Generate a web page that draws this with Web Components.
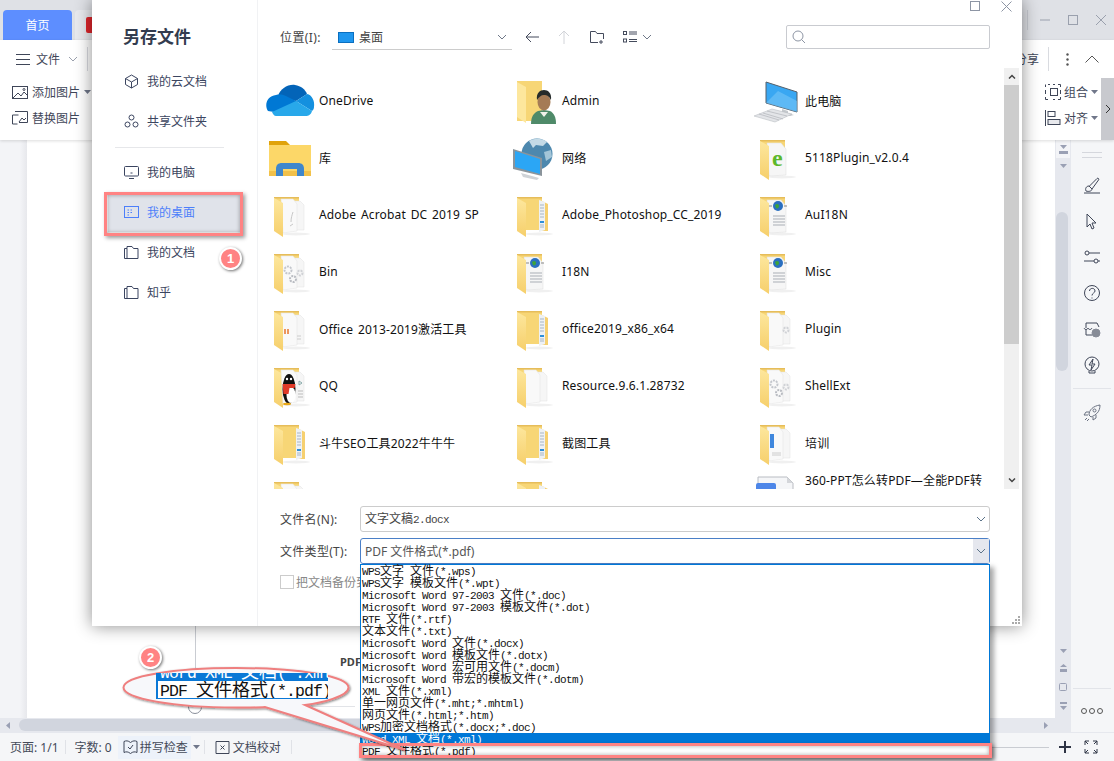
<!DOCTYPE html>
<html lang="zh">
<head>
<meta charset="utf-8">
<title>另存文件</title>
<style>
  html, body { margin: 0; width: 1114px; height: 761px; overflow: hidden; background: #fff; }
  body { font: 12px "Noto Sans", "Noto Sans CJK SC", sans-serif; color: #333; }
</style>
</head>
<body>
<wps-window>
  <wps-titlebar></wps-titlebar>
  <wps-ribbon></wps-ribbon>
  <wps-workspace></wps-workspace>
  <wps-statusbar></wps-statusbar>
  <save-dialog></save-dialog>
  <type-list></type-list>
  <mark-layer></mark-layer>
</wps-window>

<script>
// base class, every element renders its html into an open shadow root
class Box extends HTMLElement {
  constructor() {
    super();
    this.attachShadow({ mode: 'open' });
  }
  connectedCallback() {
    this.shadowRoot.innerHTML = this.render();
  }
}

// line icon helper
const line = (w, h, body, color = '#3f4658', vb = '') =>
  `<svg width="${w}" height="${h}" viewBox="${vb || `0 0 ${w} ${h}`}" fill="none" stroke="${color}" stroke-width="1" style="display:block;flex:none">${body}</svg>`;

const chevron = (color = '#7b8394') => line(10, 6, '<path d="M1 1l4 4 4-4"/>', color);
const caret = (color = '#70778a') => `<svg width="7" height="4" style="display:block;flex:none"><path d="M0 0h7L3.5 4z" fill="${color}"/></svg>`;

// text in the old bitmap style: latin is half as wide as the chinese
class SimText extends Box {
  render() {
    const runs = (this.getAttribute('t') || '').split(/([\u2e80-\u9fff]+)/);
    const spans = runs.map((r, i) => r ? `<span class="${i % 2 ? 'c' : 'l'}">${r}</span>` : '').join('');
    return `<style>
      :host { display: inline-block; white-space: pre; font-size: 12px; line-height: 1; }
      .c { font-family: "Noto Sans CJK SC", sans-serif; }
      .l { font-family: "Liberation Mono", monospace; font-size: .9167em; letter-spacing: -.0545em; }
    </style>${spans}`;
  }
}
customElements.define('sim-text', SimText);

class WpsWindow extends Box {
  render() {
    return `<style>
      :host { display: flex; flex-direction: column; position: relative; width: 1114px; height: 761px; overflow: hidden; }
    </style><slot></slot>`;
  }
}
customElements.define('wps-window', WpsWindow);

class WpsTitlebar extends Box {
  render() {
    return `<style>
      :host { display: flex; align-items: flex-end; height: 40px; padding-left: 3px; gap: 3px; background: #dfe1e6; flex: none; }
      .home { width: 69px; height: 30px; background: #5d8eff; color: #fff; border-radius: 4px 4px 0 0; display: flex; align-items: center; justify-content: center; font-size: 12px; }
      .doc { width: 120px; height: 30px; background: #e9eaee; border-radius: 4px 4px 0 0; display: flex; align-items: center; padding-left: 11px; box-sizing: border-box; }
      .logo { width: 16px; height: 16px; background: #e0262c; border-radius: 2px; }
      .ctl { margin-left: auto; display: flex; align-items: center; height: 40px; padding-right: 8px; }
      .sep { width: 1px; height: 20px; background: #c9ccd3; margin-right: 12px; }
      .ctl svg { margin-left: 18px; }
      .ctl svg:first-of-type { margin-left: 0; }
    </style>
    <div class="home">首页</div>
    <div class="doc"><div class="logo"></div></div>
    <div class="ctl">
      <div class="sep"></div>
      ${line(10, 10, '<path d="M0 5h10"/>', '#9aa0ad')}
      ${line(10, 10, '<rect x=".5" y=".5" width="9" height="9"/>', '#9aa0ad')}
      ${line(10, 10, '<path d="M0 0l10 10M10 0L0 10"/>', '#9aa0ad')}
    </div>`;
  }
}
customElements.define('wps-titlebar', WpsTitlebar);

class WpsRibbon extends Box {
  render() {
    return `<style>
      :host { display: flex; flex-direction: column; height: 100px; background: #fff; flex: none; box-shadow: 0 1px 3px rgba(0,0,0,.14); position: relative; z-index: 1; color: #3f4658; }
      .top { display: flex; justify-content: space-between; align-items: center; height: 38px; }
      .bottom { display: flex; justify-content: space-between; flex: 1; }
      .group { display: flex; align-items: center; }
      .file { padding-left: 16px; gap: 6px; font-size: 12px; }
      .file svg:nth-of-type(2) { margin-left: 2px; }
      .file .sep { margin-left: 3px; }
      .sep { width: 1px; height: 24px; background: #d9dbe0; }
      .tools { display: grid; grid-template-rows: 26px 26px; align-content: start; padding: 1px 0 0 12px; }
      .tool { display: flex; align-items: center; gap: 3px; }
      .right { display: flex; }
      .box { width: 7px; height: 21px; border: 1px solid #3f4658; border-left: 0; margin-top: 6px; box-sizing: border-box; }
      .part { position: relative; width: 32px; }
      .part .caret { position: absolute; top: 39px; left: 8px; }
      .scroll { width: 13px; background: #c8c9ce; display: flex; align-items: center; justify-content: center; margin-left: 3px; }
    </style>
    <div class="top">
      <div class="group file">
        ${line(14, 11, '<path d="M0 .5h14M0 5.5h14M0 10.5h14"/>')}
        <span>文件</span>
        ${chevron('#9aa0ad')}
        <span class="sep"></span>
      </div>
      <div class="group share">
        <span style="margin-right:9px">分享</span>
        <span class="sep"></span>
        <svg width="3" height="13" style="margin:0 16px 0 17px"><circle cx="1.5" cy="1.5" r="1.2" fill="#555"/><circle cx="1.5" cy="6.5" r="1.2" fill="#555"/><circle cx="1.5" cy="11.5" r="1.2" fill="#555"/></svg>
        ${line(14, 8, '<path d="M.5 7.5l6.5-6.5 6.5 6.5"/>', '#555')}
        <span style="width:15px"></span>
      </div>
    </div>
    <div class="bottom">
      <div class="tools">
        <div class="tool" style="gap:4px">
          ${line(16, 13, '<rect x=".5" y=".5" width="15" height="12"/><path d="M1 12l5-5 3 3 3-4 3 3"/><circle cx="12" cy="3.5" r="1"/>')}
          <span>添加图片</span>${caret()}
        </div>
        <div class="tool" style="gap:4px">
          ${line(16, 14, '<path d="M3 .5h12.5v11H7M.5 4h6M.5 4v9h5"/><path d="M7 11l3-4 2 2 2-2"/>')}
          <span>替换图片</span>
        </div>
      </div>
      <div class="right">
        <div class="part"><div class="box"></div><span class="caret">${caret()}</span></div>
        <div class="tools" style="padding-left:17px">
          <div class="tool">
            ${line(16, 16, '<path d="M3 .5h2M8 .5h2M13 .5h2.5V3M15.5 6v4M15.5 13v2.5H13M8 15.5h2M3 15.5H.5V13M.5 6v4M.5 3V.5"/><rect x="5.5" y="4.5" width="7" height="7"/>')}
            <span>组合</span>${caret()}
          </div>
          <div class="tool">
            ${line(16, 16, '<path d="M.5 0v16"/><rect x="3" y="1.5" width="7" height="5" /><rect x="3" y="9.5" width="12" height="5" fill="#e8e9ed"/>')}
            <span>对齐</span>${caret()}
          </div>
        </div>
        <div class="scroll">${line(6, 10, '<path d="M1 1l4 4-4 4"/>', '#333')}</div>
      </div>
    </div>`;
  }
}
customElements.define('wps-ribbon', WpsRibbon);

const PANEL_ICONS = [
  '<path d="M1 17h16M3 15c-1-2 0-5 3-5l3 3c0 2-3 3-6 2zM6.5 10L14 2.5c1-1 2.500 .5 1.500 1.500L9 13"/>',
  '<path d="M4 2v13l3-3 2 5 2-1-2-5h4z"/>',
  '<circle cx="4" cy="5" r="2"/><path d="M6 5h11M1 13h10"/><circle cx="13" cy="13" r="2"/><path d="M15 13h2"/>',
  '<circle cx="9" cy="9" r="7.500"/><path d="M6.500 7c0-3.500 5.500-3.500 5.500 0 0 2-3 2-3 4.500M9 13.500v1"/>',
  '<path d="M3 8V3h11l2 4M1 8c1 2 3 2 4 0 1 2 3 2 4 0M3 9v6h6"/><circle cx="13" cy="13" r="4" fill="#3f4658" opacity=".6"/>',
  '<circle cx="9" cy="8" r="7"/><path d="M10 3L6 9h3l-1 5 4-6H9zM6 15v2h6v-2"/>'
];

class WpsWorkspace extends Box {
  render() {
    const icons = PANEL_ICONS.map(p => `<div class="ico">${line(18, 18, p)}</div>`).join('');
    return `<style>
      :host { display: grid; grid-template-columns: 1fr 43px; grid-template-rows: 1fr 14px; height: 592px; flex: none; background: #f3f4f7; }
      .main { display: flex; min-height: 0; }
      .gutter { width: 20px; background: #f3f4f7; }
      .gutter2 { width: 7px; background: linear-gradient(90deg,#f3f4f7,#e7e8ec); }
      .page { flex: 1; background: #fff; position: relative; overflow: hidden; }
      .vline { position: absolute; left: 168px; top: 470px; width: 1px; height: 96px; background: #c9ccd2; }
      .hline { position: absolute; left: 168px; top: 566px; width: 160px; height: 1px; background: #e2e4e8; }
      .ring { position: absolute; left: 161px; top: 560px; width: 12px; height: 12px; border: 1px solid #8a8f9b; border-radius: 50%; }
      .pdf { position: absolute; left: 313px; top: 514px; font-size: 11px; font-weight: 700; color: #444; }
      .vbar { width: 16px; background: #e6e8ee; display: flex; flex-direction: column; align-items: center; }
      .vbar .head { width: 14px; height: 18px; background: #f3f4f7; display: flex; flex-direction: column; align-items: center; justify-content: center; gap: 2px; }
      .vbar .thumb { width: 12px; height: 159px; margin-top: 44px; margin-right: 2px; background: #d1d5de; border-radius: 6px; }
      .vbar .foot { margin-top: auto; display: flex; flex-direction: column; align-items: center; gap: 11px; padding-bottom: 8px; }
      .up { margin-top: 6px; }
      .panel { grid-row: 1 / 3; grid-column: 2; background: #f5f6f8; display: flex; flex-direction: column; align-items: center; padding-right: 1px; box-sizing: border-box; }
      .grip { width: 20px; height: 4px; border-top: 1px solid #d5d7dd; border-bottom: 1px solid #d5d7dd; margin: 12px 0 9px; }
      .ico { height: 36px; display: flex; align-items: center; }
      .rule { width: 38px; height: 1px; background: #e2e4e9; }
      .rocket { margin-top: 6px; }
      .bot { margin-top: auto; width: 38px; border-top: 1px solid #e2e4e9; height: 43px; display: flex; align-items: center; justify-content: center; gap: 2px; }
      .bot i { width: 4px; height: 4px; border: 1px solid #555; border-radius: 50%; }
      .hbar { background: #e6e8ee; display: flex; align-items: center; padding-left: 6px; }
      .hbar .thumb { margin-left: 9px; width: 900px; height: 12px; background: #d1d5de; border-radius: 6px; }
      .hbar .end { margin-left: auto; margin-right: 23px; }
    </style>
    <div class="main">
      <div class="gutter"></div><div class="gutter2"></div>
      <div class="page">
        <div class="vline"></div><div class="hline"></div><div class="ring"></div><div class="pdf">PDF</div>
      </div>
      <div class="vbar">
        <div class="head">${caret('#9aa0b4')}<svg width="9" height="3"><path d="M0 0h9v3H0z" fill="#9aa0b4"/></svg></div>
        <div class="up">${caret('#9aa0b4')}</div>
        <div class="thumb"></div>
        <div class="foot">
          ${caret('#9aa0b4')}
          <svg width="7" height="8"><path d="M3.500 0L7 3H0zM0 5h7v3H0z" fill="#9aa0b4"/></svg>
          <svg width="8" height="8"><rect x=".5" y=".5" width="7" height="7" rx="1" fill="none" stroke="#9aa0b4"/></svg>
          <svg width="7" height="8"><path d="M0 0h7v2H0zM0 4h7L3.500 8z" fill="#9aa0b4"/></svg>
        </div>
      </div>
    </div>
    <div class="panel">
      <div class="grip"></div>
      ${icons}
      <div class="rule" style="margin-top:5px"></div>
      <div class="rocket ico">${line(18, 18, '<path d="M6 11c0-5 4-9 11-10 0 7-4 10-9 12zM6 8H3L1 11h4M10 13v3l3-2v-3M4 14l-2 2M6 15l-2 2"/><circle cx="11.500" cy="6.500" r="1.500"/>', '#6b7282')}</div>
      <div class="bot"><i></i><i></i><i></i></div>
    </div>
    <div class="hbar">
      <svg width="4" height="7"><path d="M4 0v7L0 3.500z" fill="#9aa0b4"/></svg>
      <div class="thumb"></div>
      <svg class="end" width="4" height="7"><path d="M0 0v7l4-3.500z" fill="#9aa0b4"/></svg>
    </div>`;
  }
}
customElements.define('wps-workspace', WpsWorkspace);

class WpsStatusbar extends Box {
  render() {
    return `<style>
      :host { display: flex; align-items: center; height: 29px; background: #f5f6f8; flex: none; border-top: 1px solid #e6e8ee; box-sizing: border-box; padding-left: 10px; color: #444a58; font-size: 12px; }
      .sep { width: 1px; height: 14px; background: #e0e2e7; }
      .on { display: flex; align-items: center; gap: 2px; background: #edf2fa; height: 23px; width: 73px; padding-left: 5px; box-sizing: border-box; margin-left: 6px; }
      .zoom { margin-left: auto; display: flex; align-items: center; }
      .track { width: 60px; height: 1px; background: #c9ccd2; margin-right: 10px; }
    </style>
    <span>页面: 1/1</span><span class="sep" style="margin:0 9px 0 6px"></span>
    <span>字数: 0</span>
    <div class="on">${line(15, 15, '<path d="M1 1.500c2-1 4-1 6.500 1 2.500-2 4.500-2 6.500-1v11c-2-1-4-1-6.500 1-2.500-2-4.500-2-6.500-1z"/><path d="M5 7l2 2 3-4"/>')}<span>拼写检查</span></div>
    <span style="margin:0 2px 0 2px">${caret()}</span>
    <span class="sep" style="margin-left:2px;margin-right:10px"></span>
    ${line(15, 15, '<path d="M1 1.500h13v12H1zM5.500 5.500l4 4M9.500 5.500l-4 4"/>')}
    <span style="margin-left:3px">文档校对</span>
    <span class="sep" style="margin-left:10px"></span>
    <div class="zoom">
      <div class="track"></div>
      ${line(12, 12, '<path d="M6 0v12M0 6h12"/>', '#2e3445').replace('stroke-width="1"', 'stroke-width="2"')}
      <span style="width:13px"></span>
      ${line(14, 14, '<path d="M1 5V1h4M1 1l3 3M13 5V1H9M13 1l-3 3M1 9v4h4M1 13l3-3M13 9v4H9M13 13l-3-3"/>', '#2e3445')}
      <span style="width:16px"></span>
    </div>`;
  }
}
customElements.define('wps-statusbar', WpsStatusbar);

class NavItem extends Box {
  render() {
    const on = this.hasAttribute('on');
    const color = on ? '#4d7ffa' : '#3b4560';
    const icons = {
      cloud: '<path d="M7.500 1l6 3.500v6l-6 3.500-6-3.500v-6zM1.500 4.500l6 3.500 6-3.500M7.500 8v6"/>',
      share: '<circle cx="7.500" cy="3.500" r="2.500"/><circle cx="3.500" cy="10.500" r="2.500"/><circle cx="11.500" cy="10.500" r="2.500"/>',
      pc: '<rect x=".5" y="1.500" width="14" height="9.500" rx="1"/><path d="M5 13.500h5M6.500 8h2"/>',
      desk: '<rect x=".5" y="1.500" width="14" height="11"/><path d="M3.500 5h1.500M6.500 5h1.500M3.500 7.500h1.500M6.500 7.500h1.500M3.500 10h1.500"/>',
      folder: '<path d="M3 3.500V1.500h5l1.500 2h4.500v10H3zM3 3.500H.5v10H3"/>'
    };
    return `<style>
      :host { display: flex; align-items: center; height: 40px; padding-left: 32px; gap: 8px; color: ${color}; font-size: 12px; }
    </style>${line(15, 15, icons[this.getAttribute('icon')], color)}<slot></slot>`;
  }
}
customElements.define('nav-item', NavItem);

// paper drawn inside an open folder
const PAPERS = {
  blank: '',
  acro: '<path d="M25 30c0-4 1-7 2-10M24 34l3-2" stroke="#c8c8c8" fill="none"/>',
  gear: '<circle cx="22" cy="21" r="3.500" fill="none" stroke="#c3c6cc" stroke-width="2" stroke-dasharray="2 1"/><circle cx="27" cy="30" r="3" fill="none" stroke="#b9bcc2" stroke-width="2" stroke-dasharray="2 1"/>',
  gear2: '<circle cx="34" cy="24" r="2.500" fill="none" stroke="#d0d2d6" stroke-width="2" stroke-dasharray="2 1"/>',
  globe: '<circle cx="26" cy="14" r="5" fill="#2a6fc0"/><path d="M23 13c2-2 4-1 4 1s-2 3-3 2z" fill="#3da33a"/><path d="M20 14l-3 0M32 14l3 0" stroke="#888"/><path d="M21 24h12M21 27h12M21 30h12M21 33h12" stroke="#a9aeb5"/>',
  ie: '<text x="20" y="31" font-family="Liberation Serif, serif" font-size="24" font-weight="700" fill="#5cb82a">e</text>',
  qq: '<ellipse cx="23" cy="26" rx="6.500" ry="15" fill="#111"/><ellipse cx="25" cy="32" rx="4.500" ry="8" fill="#fff"/><path d="M16.500 21h13l-1 4h-5l-1 6h-5z" fill="#e03a28"/><ellipse cx="21" cy="41" rx="4" ry="1.200" fill="#e8a818"/><circle cx="21" cy="16" r="1.200" fill="#fff"/><circle cx="25" cy="16" r="1.200" fill="#fff"/><path d="M33 18l3 2-3 2z" fill="none" stroke="#8aa"/><path d="M32 28h5M32 31h5M32 34h5" stroke="#bbb"/>',
  office: '<path d="M19 23v5M22 23v5" stroke="#e8762d" stroke-width="1.500"/><path d="M31 30h4M31 33h4" stroke="#ccc"/>',
  word: '<rect x="18" y="14" width="4" height="14" fill="#3f87dd"/><path d="M20 33h9M20 35h9" stroke="#ccc"/>'
};

const folderSvg = kind => {
  let inner;
  if (kind === 'stripes') {
    inner = `<path d="M33 9l6 3v27h-6z" fill="#f6d070"/>
      <path d="M30 8l6 2v28l-6 2z" fill="#eef1f4"/>
      <path d="M31 13h4M31 16h4M31 19h4M31 22h4M31 25h4" stroke="#a9b6c4"/>
      <path d="M31 29h4v2h-4z" fill="#2f8fd8"/><path d="M31 33h4M31 35h4" stroke="#a9b6c4"/>`;
  } else {
    const wide = kind === 'globe' || kind === 'ie';
    const gearB = kind === 'gear' ? PAPERS.gear2 : '';
    inner = wide
      ? `<path d="M15 8h14l5 6v26l-17 1z" fill="#f6f6f6" stroke="#dcdcdc" stroke-width=".5"/>`
      : `<path d="M28 9h6l4 4v25h-9z" fill="#f6f6f6" stroke="#e2e2e2" stroke-width=".5"/>
         <path d="M15 7h12l4 5v27l-14 2z" fill="#f9f9f9" stroke="#e2e2e2" stroke-width=".5"/>${gearB}`;
    inner += PAPERS[kind] || '';
  }
  const over = kind === 'qq';
  return `<svg width="53" height="46" viewBox="0 0 53 46" style="display:block">
    <defs><linearGradient id="f" x1="0" x2="0" y1="0" y2="1"><stop offset="0" stop-color="#fde79d"/><stop offset="1" stop-color="#f6cf6b"/></linearGradient></defs>
    <ellipse cx="30" cy="42" rx="14" ry="1.500" fill="#000" opacity=".06"/>
    <path d="M8 5h25v33H17l-9 0z" fill="#f7d676"/>
    <path d="M8 5h25v1.500H8z" fill="#e6bd5a"/>
    ${over ? '' : inner}
    <path d="M8 6l9 5v34l-9-6z" fill="url(#f)"/>
    ${over ? inner : ''}
  </svg>`;
};

const FILE_ICONS = {
  onedrive: `<svg width="53" height="46" style="display:block">
    <path d="M12 18C14 11 22 6 29 7c6 1 10 4 12 9L30 23 20 21z" fill="#0364b8"/>
    <path d="M2 33C-2 27 1 18 10 17c4-1 8 0 10 1l12 6L8 34z" fill="#0078d4"/>
    <path d="M30 23l11-7c5 1 8 7 7 13 0 2-1 3-2 4z" fill="#1490df"/>
    <path d="M6 34l24-11 16 10c-1 4-4 5-6 5H10c-2 0-3-2-4-4z" fill="#28a8ea"/></svg>`,
  library: `<svg width="53" height="46" style="display:block">
    <path d="M3 6h17l4 4H3z" fill="#e0a30b"/>
    <path d="M3 10h42v30H3z" fill="#fcd768"/><path d="M3 36h42v5H3z" fill="#f2c14a"/>
    <path d="M10 41v-7c0-4 2-6 6-6h16c4 0 6 2 6 6v7h-7v-7H17v7z" fill="#3f87cc"/></svg>`,
  admin: `<svg width="53" height="46" style="display:block">
    <path d="M8 3h25v40H8z" fill="#f7d676"/><path d="M8 4l9 5v36l-9-6z" fill="#fde79d"/>
    <path d="M22 46c0-8 3-11 7-13l6-1 6 1c4 2 6 6 6 13z" fill="#4f8a69"/>
    <path d="M31 34l4 5 4-5z" fill="#f1f1ea"/>
    <ellipse cx="35" cy="24" rx="6.500" ry="8.500" fill="#a57b55"/>
    <path d="M28 22c-1-7 3-10 7-10s8 3 7 10c-2-4-4-5-7-5s-5 2-7 5z" fill="#262b2a"/></svg>`,
  pc: `<svg width="53" height="46" style="display:block">
    <path d="M14 4l31 10v20L14 25z" fill="#39a7f2" stroke="#55606b"/>
    <path d="M14 25l12-12 19 10v11z" fill="#7cc8f8" opacity=".55"/>
    <path d="M30 31l6 2v2l6 2-4 1-11-3 3-1z" fill="#c5c9cd"/>
    <path d="M2 38l18-7 20 5-17 8z" fill="#e3e5e8" stroke="#b1b5ba" stroke-width=".5"/>
    <path d="M7 36l20 6M11 35l20 6M15 33l20 5" stroke="#b1b5ba" stroke-width=".7"/></svg>`,
  net: `<svg width="53" height="46" style="display:block">
    <circle cx="28" cy="19" r="15.500" fill="#4d88ae"/>
    <path d="M20 6c5-3 13-3 18 1l-4 4-7-1-3 3z" fill="#c4dae6"/>
    <path d="M35 17l7-2 1 7-6 4z" fill="#a3c5d8"/>
    <path d="M4 14l29 9v18L4 34z" fill="#8a949b"/>
    <path d="M6 16l25 8v15L6 32z" fill="#2ba6f5"/>
    <path d="M12 38l18 5-2 2-14-3z" fill="#cfd3d7"/></svg>`,
  doc360: `<svg width="53" height="46" style="display:block">
    <path d="M6 6h29l6 6v34H6z" fill="#f5f6f8" stroke="#b9bcc2"/><path d="M35 6v6h6z" fill="#d4d6da"/>
    <rect x="4" y="12" width="20" height="34" rx="2" fill="#4d86e8"/></svg>`
};

class FileItem extends Box {
  render() {
    const kind = this.getAttribute('kind');
    return `<style>
      :host { display: flex; align-items: center; min-width: 0; color: #111; font-size: 12px; white-space: nowrap; letter-spacing: .15px; word-spacing: 1.5px; }
      :host([top]) { align-items: flex-start; }
      .ico { width: 53px; flex: none; }
      :host([top]) .txt { padding-top: 1px; line-height: 18px; }
    </style>
    <div class="ico">${FILE_ICONS[kind] || folderSvg(kind)}</div>
    <span class="txt"><slot></slot></span>`;
  }
}
customElements.define('file-item', FileItem);

const FILES = [
  ['onedrive', 'OneDrive'], ['admin', 'Admin'], ['pc', '此电脑'],
  ['library', '库'], ['net', '网络'], ['ie', '5118Plugin_v2.0.4'],
  ['acro', 'Adobe Acrobat DC 2019 SP'], ['stripes', 'Adobe_Photoshop_CC_2019'], ['globe', 'AuI18N'],
  ['gear', 'Bin'], ['globe', 'I18N'], ['globe', 'Misc'],
  ['office', 'Office 2013-2019激活工具'], ['stripes', 'office2019_x86_x64'], ['gear2', 'Plugin'],
  ['qq', 'QQ'], ['blank', 'Resource.9.6.1.28732'], ['gear', 'ShellExt'],
  ['stripes', '斗牛SEO工具2022牛牛牛'], ['stripes', '截图工具'], ['word', '培训'],
  ['blank', ''], ['stripes', ''], ['doc360', '360-PPT怎么转PDF—全能PDF转']
];

class FileList extends Box {
  render() {
    const items = FILES.map(([k, t]) => `<file-item kind="${k}" ${k === 'doc360' ? 'top' : ''}>${t}</file-item>`).join('');
    return `<style>
      :host { display: flex; height: 421px; overflow: hidden; padding-right: 3px; flex: none; }
      .grid { flex: 1; display: grid; grid-template-columns: repeat(3, 243px); grid-auto-rows: 57px; padding: 4px 0 0 8px; overflow: hidden; }
      .bar { width: 15px; background: #f0f0f0; display: flex; flex-direction: column; }
      .btn { height: 17px; display: flex; align-items: center; justify-content: center; }
      .thumb { height: 259px; background: #cdcdcd; }
      .rest { flex: 1; }
    </style>
    <div class="grid">${items}</div>
    <div class="bar">
      <div class="btn">${line(8, 5, '<path d="M1 4.500l3-3 3 3"/>', '#444').replace('stroke-width="1"', 'stroke-width="1.500"')}</div>
      <div class="thumb"></div><div class="rest"></div>
      <div class="btn">${line(8, 5, '<path d="M1 .5l3 3 3-3"/>', '#444').replace('stroke-width="1"', 'stroke-width="1.500"')}</div>
    </div>`;
  }
}
customElements.define('file-list', FileList);

class SaveDialog extends Box {
  render() {
    return `<style>
      :host { position: absolute; left: 92px; top: 0; width: 930px; height: 626px; background: #fff; box-shadow: 0 0 16px rgba(0,0,0,.45); display: grid; grid-template-columns: 166px 1fr; z-index: 2; color: #444; }
      .side { padding-top: 25px; border-right: 1px solid #f1f2f4; }
      h1 { margin: 0 0 13px 31px; font-size: 17px; line-height: 23px; font-weight: 700; color: #333c4f; }
      .rule { height: 1px; background: #e6e7ea; margin: 6px 33px 4px 23px; }
      .on { margin: 0 16px 0 16px; background: #e0e3ea; height: 36px; padding: 2px 0; }
      nav-item[on] { padding-left: 16px; height: 36px; }
      .main { display: flex; flex-direction: column; min-width: 0; }
      .head { height: 68px; flex: none; display: flex; align-items: center; padding: 6px 32px 0 22px; box-sizing: border-box; }
      .head > span { width: 42px; letter-spacing: .4px; white-space: nowrap; }
      .loc { width: 180px; height: 24px; margin-left: 10px; border-bottom: 1px solid #ccc; display: flex; align-items: center; gap: 5px; margin-top: 1px; }
      .loc .d { width: 16px; height: 11px; background: #1e96ee; border: 1px solid #0a6fc0; box-sizing: border-box; margin-left: 6px; }
      .tools { display: flex; align-items: center; margin-left: 13px; }
      .search { margin-left: auto; width: 204px; height: 24px; box-sizing: border-box; border: 1px solid #c9cbd0; border-radius: 2px; display: flex; align-items: center; padding-left: 5px; }
      .form { padding: 17px 32px 0 22px; display: grid; grid-template-columns: 80px 1fr; row-gap: 6px; align-items: center; }
      .form > span { letter-spacing: .3px; white-space: nowrap; }
      .input { height: 26px; box-sizing: border-box; border: 1px solid #ccc; border-radius: 3px; display: flex; align-items: center; padding-left: 4px; color: #444; }
      .input.type { border-color: #4a7fc7; color: #555; }
      .arrow { margin-left: auto; align-self: stretch; width: 16px; display: flex; align-items: center; justify-content: center; }
      .type .arrow { background: #e5e7ee; }
      .check { grid-column: 1 / 3; display: flex; align-items: center; gap: 2px; height: 24px; color: #888; }
      .check i { width: 12px; height: 12px; border: 1px solid #ccc; }
      .win { position: absolute; right: 10px; top: 1px; display: flex; gap: 21px; }
      .grip { position: absolute; right: 1px; bottom: 1px; }
    </style>
    <div class="side">
      <h1>另存文件</h1>
      <nav-item icon="cloud">我的云文档</nav-item>
      <nav-item icon="share">共享文件夹</nav-item>
      <div class="rule"></div>
      <nav-item icon="pc">我的电脑</nav-item>
      <div class="on"><nav-item icon="desk" on>我的桌面</nav-item></div>
      <nav-item icon="folder">我的文档</nav-item>
      <nav-item icon="folder">知乎</nav-item>
    </div>
    <div class="main">
      <div class="head">
        <span>位置(I):</span>
        <div class="loc"><div class="d"></div><span>桌面</span><span style="margin-left:auto;margin-right:5px">${chevron('#6f7888')}</span></div>
        <div class="tools">
          ${line(14, 12, '<path d="M14 6H1M6 1L1 6l5 5"/>', '#444b5c')}
          <span style="width:19px"></span>
          ${line(12, 14, '<path d="M6 14V1M1 6l5-5 5 5"/>', '#d2d4d9')}
          <span style="width:20px"></span>
          ${line(14, 13, '<path d="M8 11.500H.5V.5h5l1.500 2h6.500V8M11 9v4M9 11h4"/>', '#444b5c')}
          <span style="width:19px"></span>
          ${line(14, 12, '<rect x=".5" y=".5" width="3" height="3"/><rect x=".5" y="8" width="3" height="3"/><path d="M6 1h8M6 3h8M6 8.500h8M6 10.500h8"/>', '#444b5c')}
          <span style="margin-left:5px">${chevron('#6f7888')}</span>
        </div>
        <div class="search">${line(14, 14, '<circle cx="6" cy="6" r="5"/><path d="M9.500 9.500l3.500 3.500"/>', '#8d95a4')}</div>
      </div>
      <file-list></file-list>
      <div class="form">
        <span>文件名(N):</span>
        <div class="input"><sim-text t="文字文稿2.docx"></sim-text><span class="arrow">${chevron('#5c7389')}</span></div>
        <span>文件类型(T):</span>
        <div class="input type"><span>PDF 文件格式(*.pdf)</span><span class="arrow">${chevron('#5c7389')}</span></div>
        <div class="check"><i></i><span>把文档备份到云</span></div>
      </div>
    </div>
    <div class="win">
      ${line(10, 10, '<rect x=".5" y=".5" width="9" height="9"/>', '#8d95a4')}
      ${line(11, 11, '<path d="M.5.5l10 10M10.500.5l-10 10"/>', '#8d95a4')}
    </div>
    <svg class="grip" width="9" height="9"><g fill="#aaa"><rect x="6" y="0" width="2" height="2"/><rect x="3" y="3" width="2" height="2"/><rect x="6" y="3" width="2" height="2"/><rect x="0" y="6" width="2" height="2"/><rect x="3" y="6" width="2" height="2"/><rect x="6" y="6" width="2" height="2"/></g></svg>`;
  }
}
customElements.define('save-dialog', SaveDialog);

const TYPES = [
  'WPS文字 文件(*.wps)', 'WPS文字 模板文件(*.wpt)', 'Microsoft Word 97-2003 文件(*.doc)',
  'Microsoft Word 97-2003 模板文件(*.dot)', 'RTF 文件(*.rtf)', '文本文件(*.txt)',
  'Microsoft Word 文件(*.docx)', 'Microsoft Word 模板文件(*.dotx)', 'Microsoft Word 宏可用文件(*.docm)',
  'Microsoft Word 带宏的模板文件(*.dotm)', 'XML 文件(*.xml)', '单一网页文件(*.mht;*.mhtml)',
  '网页文件(*.html;*.htm)', 'WPS加密文档格式(*.docx;*.doc)', 'Word XML 文档(*.xml)', 'PDF 文件格式(*.pdf)'
];

// dropdown that hangs over the dialog
class TypeList extends Box {
  render() {
    const rows = TYPES.map((t, i) => `<div class="row ${i === 14 ? 'sel' : ''}"><sim-text t="${t}"></sim-text></div>`).join('');
    return `<style>
      :host { position: absolute; left: 360px; top: 564px; width: 630px; height: 194px; box-sizing: border-box; background: #fff; border: 1px solid #0078d7; border-bottom: 0; box-shadow: 4px 3px 5px rgba(0,0,0,.35); z-index: 3; color: #111; }
      .row { height: 12px; padding-left: 1px; display: flex; align-items: center; }
      .sel { background: #0078d7; color: #fff; }
    </style>${rows}`;
  }
}
customElements.define('type-list', TypeList);

class NumBadge extends Box {
  render() {
    return `<style>
      :host { position: absolute; width: 23px; height: 23px; box-sizing: border-box; border: 2px solid #fff; border-radius: 50%; background: #ff8383; color: #fff; font: 700 13px/19px "Liberation Sans", sans-serif; text-align: center; box-shadow: 1px 1px 3px rgba(0,0,0,.55); }
    </style><slot></slot>`;
  }
}
customElements.define('num-badge', NumBadge);

// red annotations drawn over the screenshot
class MarkLayer extends Box {
  render() {
    return `<style>
      :host { position: absolute; left: 0; top: 0; width: 1114px; height: 761px; z-index: 4; pointer-events: none; }
      .frame { position: absolute; box-sizing: border-box; border: 3px solid #ff8383; box-shadow: 2px 2px 4px rgba(0,0,0,.4), inset 0 0 4px rgba(0,0,0,.35); }
      svg { position: absolute; left: 0; top: 0; }
      .zoom { position: absolute; left: 156px; top: 673px; width: 172px; height: 26px; background: #0a78d6; overflow: hidden; color: #fff; }
      .cut { position: absolute; left: 4px; top: -12px; }
      .sel { position: absolute; left: 2px; top: 8px; right: 0; height: 17px; background: #fff; color: #111; display: flex; align-items: center; padding-left: 2px; overflow: hidden; }
      sim-text { font-size: 18px; }
    </style>
    <div class="frame" style="left:104px;top:192px;width:139px;height:44px"></div>
    <num-badge style="left:219px;top:247px">1</num-badge>
    <num-badge style="left:139px;top:646px">2</num-badge>
    <div class="frame" style="left:359px;top:743px;width:633px;height:15px"></div>
    <svg width="1114" height="761">
      <defs><filter id="s" x="-5%" y="-20%" width="110%" height="140%"><feDropShadow dx="1" dy="1" stdDeviation="1.200" flood-color="#000" flood-opacity=".5"/></filter></defs>
      <path d="M123.500 687.500C123.500 676 174 668 236 668s112.500 8 112.500 19.500c0 9-28 15.500-43.500 17.500L405 750 265 707c-4 .5-20 .5-29 .5-62 0-112.500-9-112.500-20z" fill="#f7f8fb" stroke="#ef7f7f" stroke-width="2" filter="url(#s)"/>
    </svg>
    <div class="zoom">
      <div class="cut"><sim-text t="Word XML 文档(*.xml)"></sim-text></div>
      <div class="sel"><sim-text t="PDF 文件格式(*.pdf)"></sim-text></div>
    </div>`;
  }
}
customElements.define('mark-layer', MarkLayer);
</script>
</body>
</html>
